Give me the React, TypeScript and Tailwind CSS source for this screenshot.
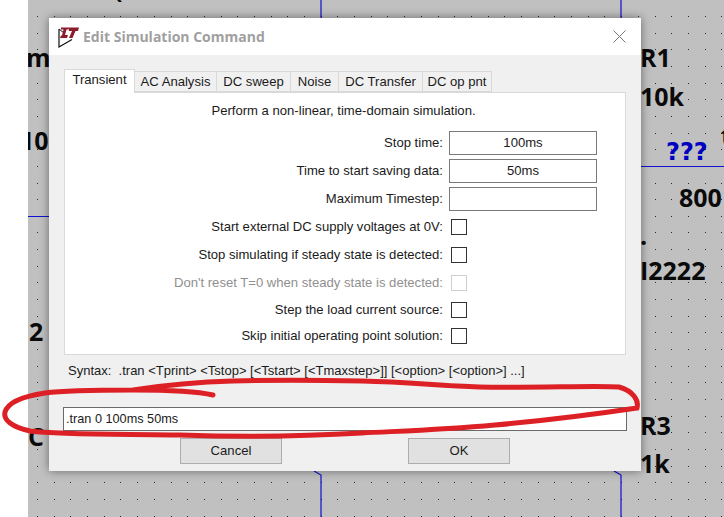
const tabs = [
  { label: 'AC Analysis', width: 'w-[82px]' },
  { label: 'DC sweep', width: 'w-[74px]' },
  { label: 'Noise', width: 'w-[48px]' },
  { label: 'DC Transfer', width: 'w-[84px]' },
  { label: 'DC op pnt', width: 'w-[69px]' },
];

const fields = [
  { label: 'Stop time:', value: '100ms' },
  { label: 'Time to start saving data:', value: '50ms' },
  { label: 'Maximum Timestep:', value: '' },
];

const checks = [
  { label: 'Start external DC supply voltages at 0V:', height: 'h-[28px]', disabled: false },
  { label: 'Stop simulating if steady state is detected:', height: 'h-[28px]', disabled: false },
  { label: "Don't reset T=0 when steady state is detected:", height: 'h-[27px]', disabled: true },
  { label: 'Step the load current source:', height: 'h-[27px]', disabled: false },
  { label: 'Skip initial operating point solution:', height: 'h-[25px]', disabled: false },
];

// schematic labels poking out from behind the dialog, coordinates relative to the canvas
const labels = [
  { text: 'no.20', cls: 'left-[2px] top-[-23px]' },
  { text: '(', cls: 'left-[86px] top-[-25px]' },
  { text: 'm', cls: 'left-[-2px] top-[44px]' },
  { text: '10', cls: 'left-[-8px] top-[127px]' },
  { text: '2', cls: 'left-[1px] top-[318px]' },
  { text: 'C', cls: 'left-[0px] top-[423px]' },
  { text: '10k', cls: 'left-[315px] top-[447px]' },
  { text: 'R1', cls: 'left-[612px] top-[44px]' },
  { text: '10k', cls: 'left-[612px] top-[83px]' },
  { text: '800', cls: 'left-[651px] top-[184px]' },
  { text: '.', cls: 'left-[612px] top-[222px]' },
  { text: 'I2222', cls: 'left-[612px] top-[257px]' },
  { text: 't', cls: 'left-[693px] top-[122px]' },
  { text: 'R3', cls: 'left-[612px] top-[412px]' },
  { text: '1k', cls: 'left-[612px] top-[450px]' },
];

const dots: { x: number; y: number }[] = [];
for (let i = 0; i < 42; i++) {
  for (let j = 0; j < 32; j++) {
    dots.push({ x: Math.round(9 + i * 16.69), y: Math.round(16 + j * 16.65) });
  }
}

const Schematic = () => (
  <>
    <svg width="696" height="517" className="absolute inset-0">
      {dots.map((d) => (
        <rect key={`${d.x}-${d.y}`} x={d.x} y={d.y} width="1" height="1" fill="#2a2a2a" />
      ))}
      <g stroke="#1010d0" strokeWidth="1.2" fill="none">
        <path d="M293 0V18M593 0V18" />
        <path d="M286 471L293 475V517M586 471L593 475V517" />
        <path d="M0 216.5H21M613 166.5H696" />
      </g>
    </svg>
    {labels.map((l) => (
      <span
        key={l.text + l.cls}
        className={`absolute ${l.cls} font-['Open_Sans',sans-serif] font-bold text-[25px] leading-[26px] text-[#0a0a0a] whitespace-nowrap`}
      >
        {l.text}
      </span>
    ))}
    <span className="absolute left-[638px] top-[139px] font-['DejaVu_Sans',sans-serif] font-bold text-[24px] leading-[26px] text-[#0000c0]">
      ???
    </span>
  </>
);

const LtLogo = () => (
  <svg width="22" height="22" viewBox="0 0 22 22" className="shrink-0">
    <path d="M1 3V21L14 13.5" fill="none" stroke="#111" strokeWidth="1.2" />
    <path d="M1 3L6 7" fill="none" stroke="#111" strokeWidth="1" />
    <path d="M3 1.5H10.5L10 3.5H8.5L7 9H10L9 12H2L3 9.5H4L5.5 3.5H3Z" fill="#8a1c2c" />
    <path d="M10 1.5H21L20 5H17.5L14.5 12H11L14 5H11Z" fill="#8a1c2c" />
  </svg>
);

const Checkbox = ({ disabled }: { disabled: boolean }) => (
  <div className={`w-[16px] h-[16px] ml-[8px] bg-white border ${disabled ? 'border-[#cfcfcf]' : 'border-[#333333]'}`} />
);

const Dialog = () => (
  <div className="absolute left-[21px] top-[18px] w-[592px] h-[453px] flex flex-col shadow-[0_0_9px_rgba(0,0,0,0.45)] font-['Liberation_Sans',sans-serif] text-[13.1px] text-[#1a1a1a]">
    <div className="h-[37px] bg-white flex items-center pl-[9px] pr-[15px]">
      <LtLogo />
      <span className="ml-[3px] font-['Open_Sans',sans-serif] font-bold text-[14px] text-[#a0a0a0]">Edit Simulation Command</span>
      <svg width="13" height="13" viewBox="0 0 13 13" className="ml-auto">
        <path d="M0.5 0.5L12.5 12.5M12.5 0.5L0.5 12.5" stroke="#777777" strokeWidth="1" />
      </svg>
    </div>

    <div className="flex-1 bg-[#f0f0f0] pl-[15px] pt-[14px]">
      <div className="flex items-end h-[23px] relative z-10">
        <div className="w-[71px] h-[24px] bg-white border border-b-0 border-[#d9d9d9] flex items-center justify-center pb-[3px] -mb-px">Transient</div>
        {tabs.map((tab) => (
          <div key={tab.label} className={`${tab.width} h-[21px] bg-[#f0f0f0] border border-l-0 border-[#d9d9d9] flex items-center justify-center`}>
            {tab.label}
          </div>
        ))}
      </div>

      <div className="w-[562px] h-[263px] bg-white border border-[#d9d9d9]">
        <div className="h-[36px] flex items-center justify-center pr-[3px]">Perform a non-linear, time-domain simulation.</div>
        {fields.map((f) => (
          <div key={f.label} className="h-[28px] flex items-center">
            <div className="w-[378px] text-right">{f.label}</div>
            <div className="ml-[6px] w-[148px] h-[24px] border border-[#7a7a7a] flex items-center justify-center">{f.value}</div>
          </div>
        ))}
        {checks.map((c) => (
          <div key={c.label} className={`${c.height} flex items-center`}>
            <div className={`w-[378px] text-right ${c.disabled ? 'text-[#8f8f8f]' : ''}`}>{c.label}</div>
            <Checkbox disabled={c.disabled} />
          </div>
        ))}
      </div>

      <div className="h-[32px] flex items-center pl-[4px] whitespace-pre text-[13px]">
        {'Syntax:  .tran <Tprint> <Tstop> [<Tstart> [<Tmaxstep>]] [<option> [<option>] ...]'}
      </div>
      <div className="mt-[20px] -ml-px w-[564px] h-[24px] bg-white border border-[#6a6a6a] flex items-center pl-[2px] pt-px text-[12.7px]">.tran 0 100ms 50ms</div>
      <div className="mt-[7px] ml-[116px] flex gap-[126px]">
        <div className="w-[102px] h-[26px] bg-[#e1e1e1] border border-[#adadad] flex items-center justify-center">Cancel</div>
        <div className="w-[102px] h-[26px] bg-[#e1e1e1] border border-[#adadad] flex items-center justify-center">OK</div>
      </div>
    </div>
  </div>
);

const App = () => (
  <div className="relative w-[724px] h-[517px] bg-white overflow-hidden pl-[28px]">
    <div className="relative w-[696px] h-[517px] bg-[#c0c0c0] overflow-hidden">
      <Schematic />
      <Dialog />
    </div>
    {/* red marker scribble drawn over the screenshot */}
    <svg width="724" height="517" className="absolute inset-0 pointer-events-none">
      <path
        d="M213 395C200 392 170 390 133 390C100 390 67 390 45 393C25 396 8 402 5 412C3 420 12 427 30 431C60 435 120 434 180 435C240 437 310 436 362 433C400 431 440 430 495 425C540 421 590 415 637 408C639 400 633 391 619 387C600 385 540 388 479 387C440 386 410 382 362 381C310 380 270 380 233 381C195 382 165 385 133 390"
        fill="none"
        stroke="#dd2026"
        strokeWidth="5"
        strokeLinecap="round"
      />
    </svg>
  </div>
);

export default App;
